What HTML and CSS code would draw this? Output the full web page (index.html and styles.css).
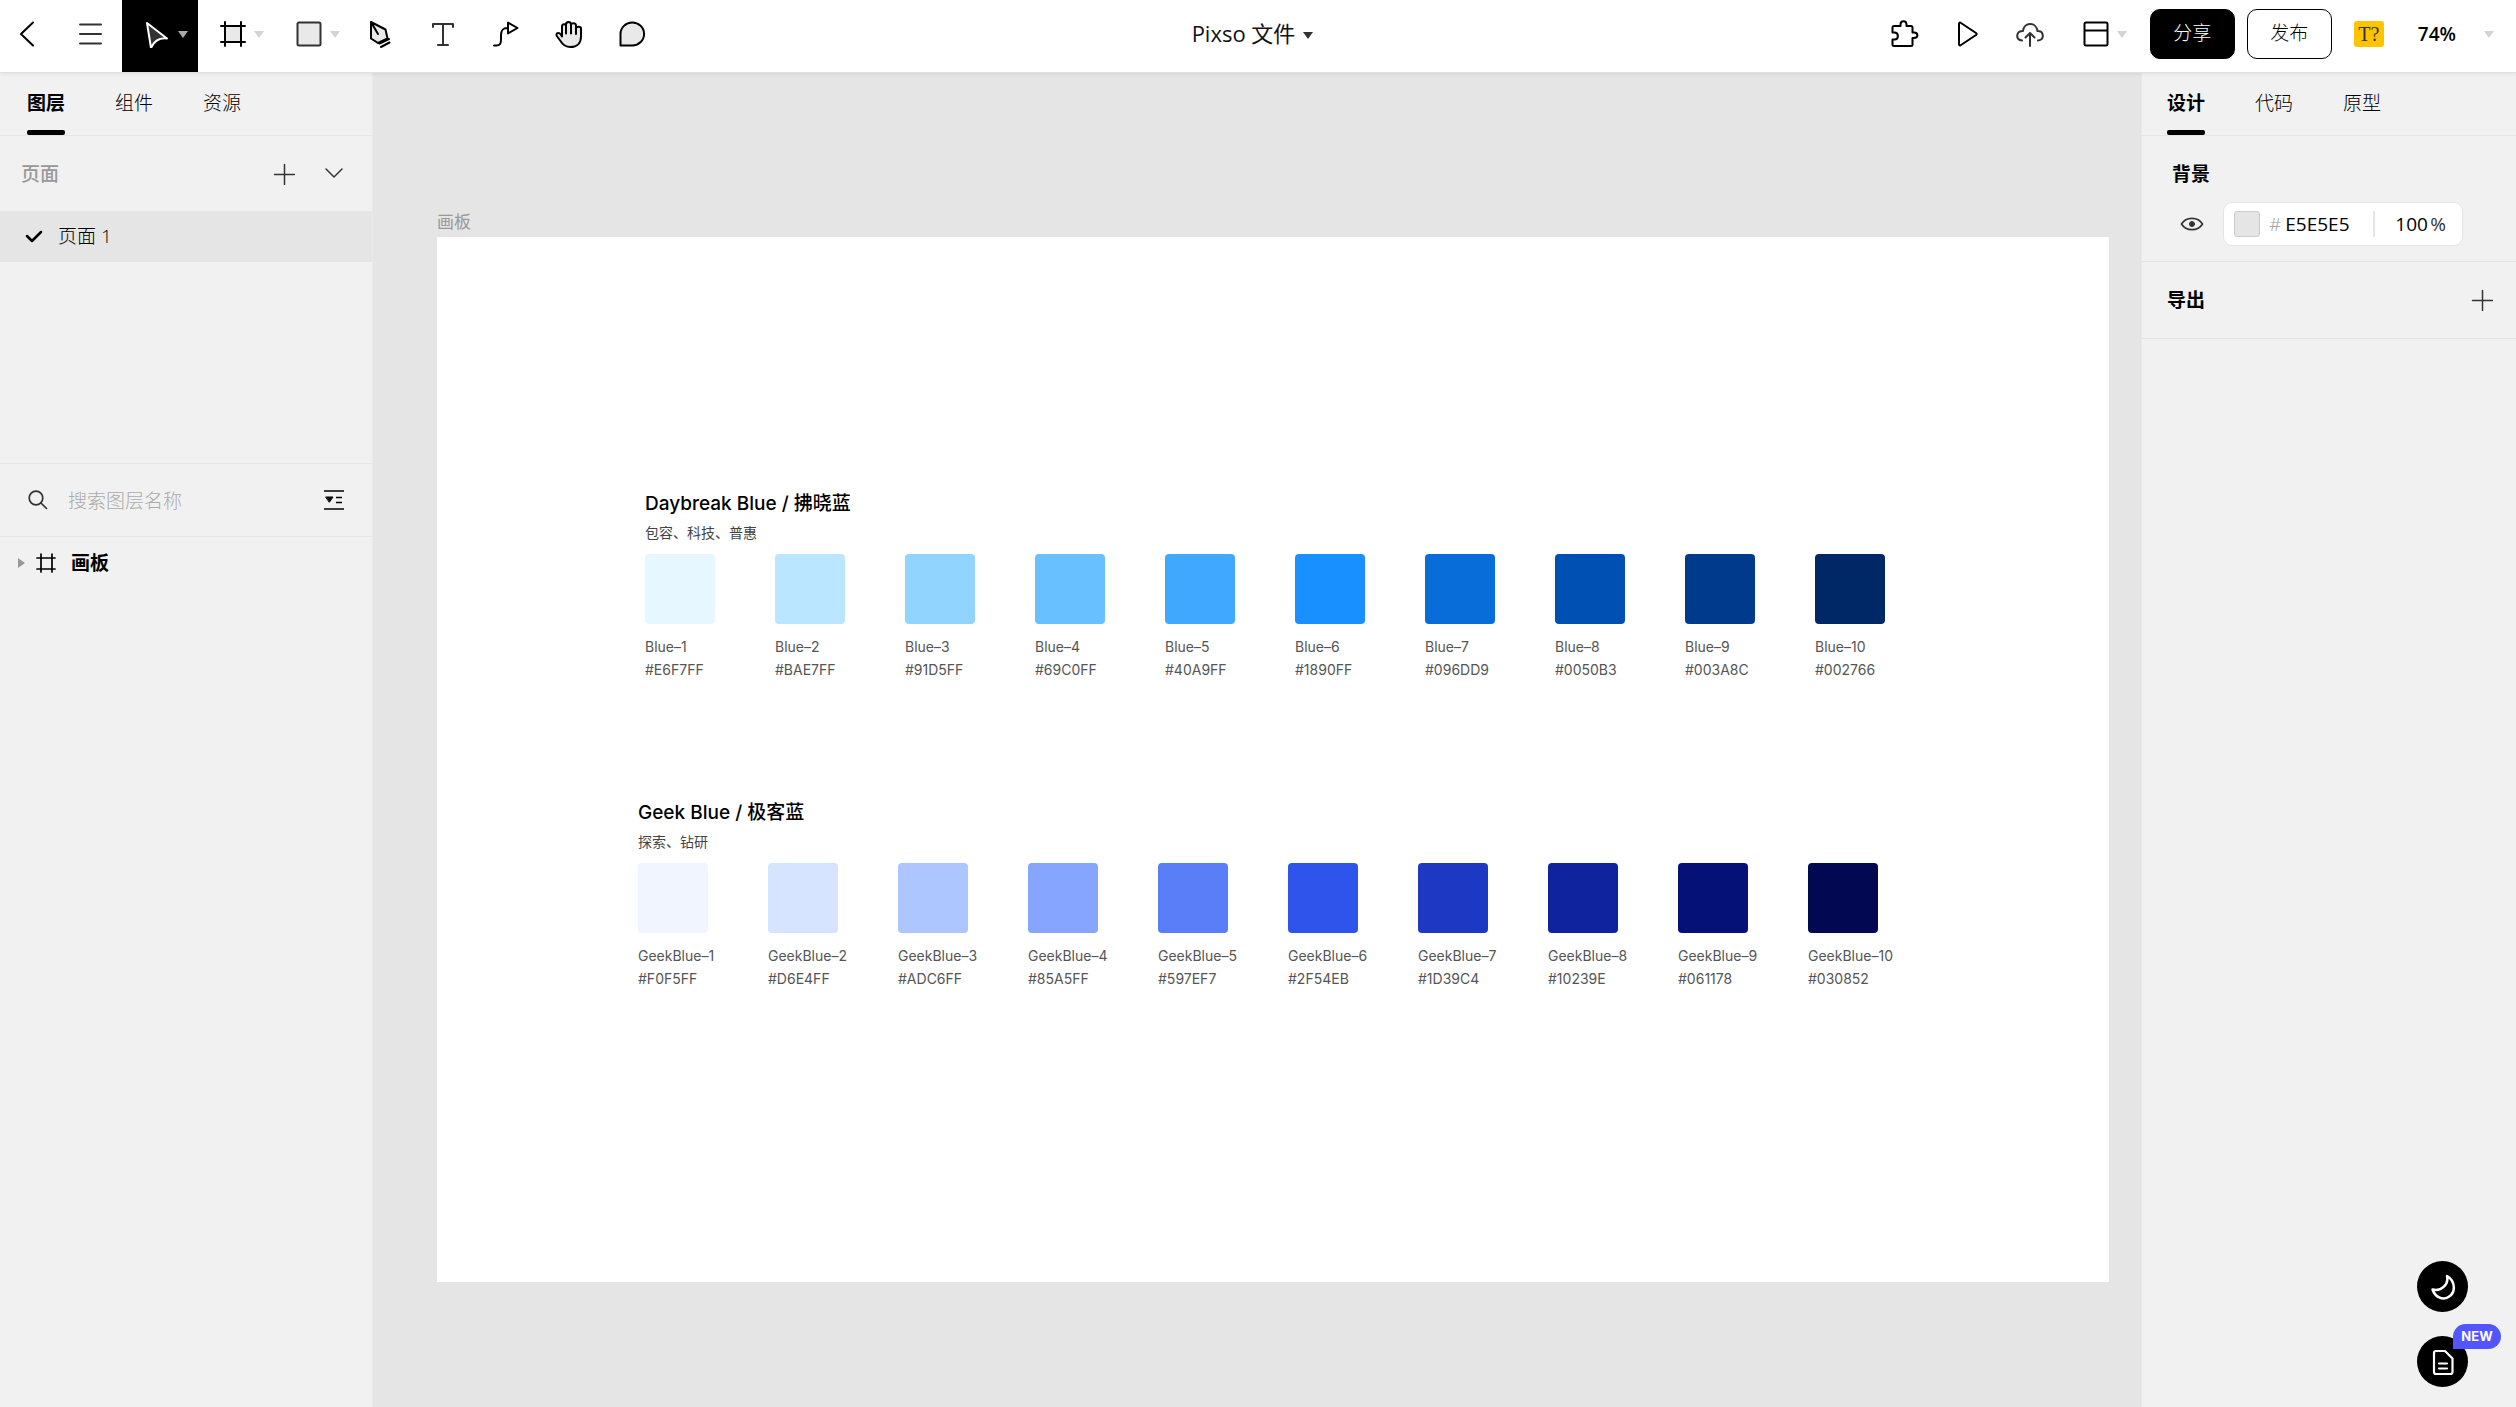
FILE: index.html
```html
<!DOCTYPE html>
<html lang="zh-CN">
<head>
<meta charset="utf-8">
<title>Pixso 文件</title>
<meta name="viewport" content="width=device-width, initial-scale=1">
<link rel="stylesheet" href="styles.css">
</head>
<body>
<header class="topbar">
  <div class="topbar-tools">
    <button class="back" aria-label="返回"><svg width="28" height="28" viewBox="0 0 28 28"><path d="M20 2.500L8 14l12 11.500" stroke-width="2"/></svg></button>
    <button class="menu" aria-label="菜单"><svg class="soft" width="28" height="28" viewBox="0 0 28 28"><path d="M4 4.500h21M4 14h21M4 23.500h21" stroke-width="2"/></svg></button>
    <button class="tool-menu active" aria-label="移动"><svg width="28" height="28" viewBox="0 0 28 28"><path class="cursor" d="M4 3L24 18.500Q13 17 8 28Z" stroke-width="2"/></svg><i class="caret"></i></button>
    <button class="tool-menu" aria-label="画板"><svg width="28" height="28" viewBox="0 0 28 28"><path class="shade" d="M6 6h16v16H6z" stroke="none"/><path d="M6 2v24M22 2v24M2 6h24M2 22h24" stroke-width="2"/></svg><i class="caret"></i></button>
    <button class="tool-menu" aria-label="矩形"><svg class="soft" width="28" height="28" viewBox="0 0 28 28"><rect class="shade" x="2.500" y="2.500" width="23" height="23" rx="1.500" stroke-width="2"/></svg><i class="caret"></i></button>
    <div class="tool-group">
      <button class="tool" aria-label="钢笔"><svg width="28" height="28" viewBox="0 0 28 28"><path class="shade" d="M5 2l14.500 7.500 2 9L12 23l-7-4.500zM5 2l7 12M13.500 23.500L23 19M15 27l8.500-4.500" stroke-width="2"/></svg></button>
      <button class="tool" aria-label="文本"><svg class="soft" width="28" height="28" viewBox="0 0 28 28"><path d="M4 7V4h20v3M14 4v21M9 25h10" stroke-width="2"/></svg></button>
      <button class="tool" aria-label="连接线"><svg width="28" height="28" viewBox="0 0 28 28"><path d="M2 25.500h2.500c4 0 4.500-2.500 4.500-6v-4c0-6 2-7.500 6.500-7.500M16 2.500v11l9.500-5.500z" stroke-width="2"/></svg></button>
      <button class="tool" aria-label="抓手"><svg width="28" height="28" viewBox="0 0 28 28"><path class="shade" d="M7 16.500V6.500c0-3 4-3 4-.5V4.500c0-3.500 5-3.500 5 0V5c0-2.500 5-2.500 5 .5v3c0-2.500 5-2.500 5 0v8C26 23 22 27 15.500 27c-5 0-8-2.500-10-6l-3.700-5c-1.300-2.500 1.700-4.500 4-1.500zM11 5v8.500M16 5v8.500M21 6v8" stroke-width="2"/></svg></button>
      <button class="tool" aria-label="评论"><svg width="28" height="28" viewBox="0 0 28 28"><path class="shade" d="M2.500 25.500V14A11.800 11.500 0 1 1 14.500 25.500z" stroke-width="2"/></svg></button>
    </div>
  </div>
  <button class="file-name">Pixso 文件<i class="caret dark"></i></button>
  <div class="topbar-actions">
    <button class="tool" aria-label="插件"><svg width="30" height="30" viewBox="0 0 30 30"><path d="M5 7h6.500V5.500c0-4.500 6-4.500 6 0V7H22q1.500 0 1.500 1.500v5H25c4.500 0 4.500 5.500 0 5.500h-1.500v6.500q0 1.500-1.500 1.500H5q-1.500 0-1.500-1.500v-5h2c4.500 0 4.500-7 0-7h-2V8.500Q3.500 7 5 7z" stroke-width="2"/></svg></button>
    <button class="tool" aria-label="播放"><svg width="28" height="28" viewBox="0 0 28 28"><path d="M6 4v20c0 1.500 1 1.800 2 1l15-10q1.300-1 0-2L8 3C7 2.200 6 2.500 6 4z" stroke-width="2"/></svg></button>
    <button class="tool" aria-label="上传"><svg class="soft" width="30" height="30" viewBox="0 0 30 30"><path d="M7 21.500C0 20.500 1 12 8 12 9 2.500 21 2.500 22.500 12c6.500 0 7.500 8.500.5 9.500M15 27V15M10.500 18.500L15 14l4.500 4.500" stroke-width="2"/></svg></button>
    <button class="tool-menu" aria-label="视图"><svg width="28" height="28" viewBox="0 0 28 28"><rect x="2.500" y="2.500" width="23" height="23" rx="1.500" stroke-width="2"/><path d="M3 10.500h22" stroke-width="2"/></svg><i class="caret"></i></button>
    <button class="btn primary">分享</button>
    <button class="btn">发布</button>
    <button class="font-badge">T?</button>
    <button class="zoom">74%<i class="caret"></i></button>
  </div>
</header>
<div class="workspace">
  <aside class="panel left">
    <nav class="tabs">
      <button class="tab current">图层</button><button class="tab">组件</button><button class="tab">资源</button>
    </nav>
    <section class="pages">
      <div class="pages-head">
        <h2>页面</h2>
        <button aria-label="添加页面"><svg class="soft" width="22" height="22" viewBox="0 0 22 22"><path d="M11.500 1.500v20M1.500 11.500h20" stroke-width="1.500"/></svg></button>
        <button aria-label="收起"><svg class="soft" width="22" height="22" viewBox="0 0 22 22"><path d="M3 6l8 8 8-8" stroke-width="1.500"/></svg></button>
      </div>
      <button class="page-item"><svg width="18" height="18" viewBox="0 0 18 18"><path d="M2 9l5 5 9-9" stroke-width="2.500"/></svg>页面 1</button>
    </section>
    <div class="search">
      <svg class="soft" width="20" height="20" viewBox="0 0 20 20"><circle cx="8" cy="8" r="6.800" stroke-width="1.700"/><path d="M13 13l5.500 5.500" stroke-width="1.700"/></svg>
      <input type="text" placeholder="搜索图层名称" aria-label="搜索图层名称">
      <button aria-label="筛选"><svg width="22" height="22" viewBox="0 0 22 22"><path d="M1 2h20M1 20h20M13 8.500h6M13 13.500h6" stroke-width="1.700" stroke-linecap="butt"/><path class="solid" d="M3 8h7l-3.500 5z" stroke-width="1"/></svg></button>
    </div>
    <button class="layer"><i class="caret side"></i><svg width="20" height="20" viewBox="0 0 20 20"><path d="M5 1v18M16 1v18M1 5h18M1 16h18" stroke-width="1.700"/></svg>画板</button>
  </aside>
  <main class="canvas">
    <div class="artboard-name">画板</div>
    <div class="artboard">
      <section class="palette daybreak">
        <h3>Daybreak Blue / 拂晓蓝</h3>
        <p>包容、科技、普惠</p>
        <ul>
          <li><i style="background:#E6F7FF"></i><span>Blue–1</span><span>#E6F7FF</span></li>
          <li><i style="background:#BAE7FF"></i><span>Blue–2</span><span>#BAE7FF</span></li>
          <li><i style="background:#91D5FF"></i><span>Blue–3</span><span>#91D5FF</span></li>
          <li><i style="background:#69C0FF"></i><span>Blue–4</span><span>#69C0FF</span></li>
          <li><i style="background:#40A9FF"></i><span>Blue–5</span><span>#40A9FF</span></li>
          <li><i style="background:#1890FF"></i><span>Blue–6</span><span>#1890FF</span></li>
          <li><i style="background:#096DD9"></i><span>Blue–7</span><span>#096DD9</span></li>
          <li><i style="background:#0050B3"></i><span>Blue–8</span><span>#0050B3</span></li>
          <li><i style="background:#003A8C"></i><span>Blue–9</span><span>#003A8C</span></li>
          <li><i style="background:#002766"></i><span>Blue–10</span><span>#002766</span></li>
        </ul>
      </section>
      <section class="palette geek">
        <h3>Geek Blue / 极客蓝</h3>
        <p>探索、钻研</p>
        <ul>
          <li><i style="background:#F0F5FF"></i><span>GeekBlue–1</span><span>#F0F5FF</span></li>
          <li><i style="background:#D6E4FF"></i><span>GeekBlue–2</span><span>#D6E4FF</span></li>
          <li><i style="background:#ADC6FF"></i><span>GeekBlue–3</span><span>#ADC6FF</span></li>
          <li><i style="background:#85A5FF"></i><span>GeekBlue–4</span><span>#85A5FF</span></li>
          <li><i style="background:#597EF7"></i><span>GeekBlue–5</span><span>#597EF7</span></li>
          <li><i style="background:#2F54EB"></i><span>GeekBlue–6</span><span>#2F54EB</span></li>
          <li><i style="background:#1D39C4"></i><span>GeekBlue–7</span><span>#1D39C4</span></li>
          <li><i style="background:#10239E"></i><span>GeekBlue–8</span><span>#10239E</span></li>
          <li><i style="background:#061178"></i><span>GeekBlue–9</span><span>#061178</span></li>
          <li><i style="background:#030852"></i><span>GeekBlue–10</span><span>#030852</span></li>
        </ul>
      </section>
    </div>
  </main>
  <aside class="panel right">
    <nav class="tabs">
      <button class="tab current">设计</button><button class="tab">代码</button><button class="tab">原型</button>
    </nav>
    <section class="background">
      <h2>背景</h2>
      <div class="background-row">
        <button aria-label="显示背景"><svg class="soft" width="24" height="24" viewBox="0 0 24 24"><path d="M1.500 12C6 4.500 18 4.500 22.500 12 18 19.500 6 19.500 1.500 12z" stroke-width="1.700"/><circle class="solid" cx="12" cy="12" r="2.500" stroke-width="1"/></svg></button>
        <div class="color-field">
          <i class="chip"></i>
          <label for="hex">#</label><input id="hex" class="hex" type="text" value="E5E5E5">
          <input id="alpha" class="alpha" type="text" value="100"><label class="unit" for="alpha">%</label>
        </div>
      </div>
    </section>
    <section class="export">
      <h2>导出</h2>
      <button aria-label="添加导出"><svg class="soft" width="22" height="22" viewBox="0 0 22 22"><path d="M11.500 1.500v20M1.500 11.500h20" stroke-width="1.500"/></svg></button>
    </section>
    <div class="floating">
      <button class="round" aria-label="深色模式"><svg width="28" height="28" viewBox="0 0 28 28"><path d="M18 3c2 8-5.500 16-14.500 13.500C6 24 13.500 27.500 19.500 24 27.500 19.500 26 7.500 18 3z" stroke-width="2.500"/></svg></button>
      <button class="round" aria-label="文档"><svg width="28" height="28" viewBox="0 0 28 28"><path d="M7 3h9l7.500 7.500V24q0 2-2 2H7q-2 0-2-2V5q0-2 2-2zM10 15.500h8M10 20.500h8" stroke-width="2.200"/></svg><span class="new">NEW</span></button>
    </div>
  </aside>
</div>
</body>
</html>
```

FILE: styles.css
```css
* { box-sizing: border-box; }
body {
  margin: 0;
  min-height: 100vh;
  display: flex;
  flex-direction: column;
  font: 300 19px/28px "Open Sans", "Noto Sans CJK SC", sans-serif;
  color: #000;
  background: #f1f1f1;
}
button, input { font: inherit; color: inherit; border: 0; padding: 0; margin: 0; background: none; }
button { display: flex; align-items: center; }
input { min-width: 0; outline: 0; }
h2, h3, p, ul { margin: 0; padding: 0; list-style: none; font-weight: inherit; }
svg { display: block; flex: none; fill: none; stroke: #000; stroke-linecap: round; stroke-linejoin: round; }
.soft { stroke: #333; }
.shade { fill: #e9e9e9; }
.solid { fill: #000; }
.soft .solid { fill: #333; }

.caret { width: 0; height: 0; flex: none; border: 5px solid transparent; border-top: 7px solid #d4d4d4; border-bottom: 0; }
.caret.dark { border-top-color: #333; margin-top: 4px; }
.caret.side { border: 5px solid transparent; border-left: 7px solid #999; border-right: 0; }

/* Top bar */
.topbar {
  position: relative;
  display: flex;
  justify-content: space-between;
  height: 73px;
  background: #fff;
  border-bottom: 1px solid #e0e0e0;
  box-shadow: 0 1px 4px rgba(0, 0, 0, .08);
}
.topbar > *, .tool-group { display: flex; }
.topbar-tools, .topbar-actions { flex: 1; }
.topbar-actions { justify-content: flex-end; align-items: center; padding: 0 22px 4px 0; }
.topbar-tools button { height: 72px; padding-bottom: 4px; justify-content: center; }
.back { width: 58px; padding-right: 4px; }
.menu { width: 64px; }
.tool-menu { width: 76px; gap: 7px; padding-left: 10px; justify-content: center; }
.tool-menu.active { background: #000; }
.active svg { stroke: #fff; }
.active .caret { border-top-color: #aaa; }
.cursor { fill: #333; }
.tool { width: 63px; justify-content: center; }
.tool-group { margin-left: -2px; }
.file-name { gap: 8px; padding: 0 0 6px 11px; font-size: 22px; font-weight: 400; color: #111; }
.btn { width: 85px; height: 50px; padding-bottom: 2px; justify-content: center; border: 1px solid #000; border-radius: 10px; margin-left: 12px; }
.btn.primary { background: #000; color: #fff; }
.font-badge { width: 30px; height: 26px; margin-left: 22px; justify-content: center; border-radius: 3px; background: #ffc400; color: #333; font: 400 20px/24px "Liberation Serif", serif; }
.zoom { margin-left: 34px; gap: 28px; font-weight: 600; }

/* Side panels */
.workspace { flex: 1; display: flex; }
.panel { display: flex; flex-direction: column; flex: none; background: #f1f1f1; }
.left { width: 373px; border-right: 1px solid #e9e9e9; }
.right { width: 375px; border-left: 1px solid #e9e9e9; }
.panel h2 { font-size: 19px; font-weight: 700; }
.tabs { display: flex; gap: 50px; height: 63px; padding-left: 27px; border-bottom: 1px solid #e5e5e5; }
.right .tabs { padding-left: 25px; }
.tab { align-items: flex-start; padding-top: 16px; border-bottom: 5px solid transparent; }
.tab.current { font-weight: 700; position: relative; }
.tab.current::after { content: ""; position: absolute; left: 0; right: 0; bottom: -5px; height: 5px; border-radius: 2px; background: #000; }
.pages { height: 328px; border-bottom: 1px solid #e5e5e5; }
.pages-head { display: flex; align-items: center; gap: 28px; height: 75px; padding: 0 27px 0 21px; }
.pages-head h2 { flex: 1; font-weight: 500; color: #999; }
.page-item { width: 100%; height: 51px; gap: 15px; padding: 0 0 2px 25px; background: #e5e5e5; }
.search { display: flex; align-items: center; height: 73px; padding: 0 27px 0 28px; border-bottom: 1px solid #e5e5e5; }
.search input { flex: 1; margin-left: 20px; padding-top: 1px; }
.search input::placeholder { color: #aaa; opacity: 1; }
.layer { height: 51px; padding-left: 18px; gap: 11px; font-weight: 700; }
.layer svg { margin-right: 4px; }

.background { height: 126px; padding: 24px 30px 0; border-bottom: 1px solid #e5e5e5; }
.background-row { display: flex; align-items: center; margin: 14px 0 0 8px; }
.color-field { display: flex; align-items: center; width: 240px; height: 44px; margin-left: 19px; padding-left: 10px; border: 1px solid #e5e5e5; border-radius: 9px; background: #fff; font-weight: 400; }
.chip { width: 26px; height: 26px; margin-right: 9px; border: 1px solid #ccc; border-radius: 3px; background: #e5e5e5; }
.color-field label { color: #999; font-weight: 300; }
.hex { width: 90px; height: 26px; margin-left: 4px; border-right: 2px solid #e5e5e5; }
.alpha { width: 34px; margin-left: 20px; }
.color-field .unit { margin-left: 1px; color: #333; font-weight: 400; }
.export { display: flex; align-items: center; justify-content: space-between; height: 77px; padding: 0 23px 0 25px; border-bottom: 1px solid #e5e5e5; }

/* Canvas */
.canvas { flex: 1; min-width: 0; padding: 136px 32px 60px 64px; background: #e5e5e5; }
.artboard-name { height: 28px; font-size: 17px; line-height: 26px; font-weight: 400; color: #999; }
.artboard { min-height: 1045px; padding: 253px 120px 120px 201px; background: #fff; font-family: Inter, "Noto Sans CJK SC", sans-serif; }
.palette h3 { font-size: 19px; line-height: 28px; font-weight: 500; }
.palette { padding-left: 7px; }
.palette.geek { padding-left: 0; margin-top: 118px; }
.palette p { font-size: 14px; line-height: 22px; margin-top: 4px; font-weight: 400; color: #444; }
.palette ul { display: grid; grid-template-columns: repeat(10, 70px); gap: 60px; margin-top: 10px; }
.palette li { font-size: 14px; line-height: 23px; font-weight: 400; color: #555; }
.palette i { display: block; height: 70px; margin-bottom: 11px; border-radius: 4px; }
.palette span { display: block; white-space: nowrap; }

/* Floating shortcuts */
.floating { display: grid; gap: 24px; margin: auto 48px 20px auto; }
.round { position: relative; width: 51px; height: 51px; justify-content: center; border-radius: 50%; background: #000; }
.round svg { stroke: #fff; }
.new { position: absolute; left: 36px; top: -12px; width: 48px; height: 25px; border-radius: 13px 13px 13px 0; background: #5355ff; color: #fff; text-align: center; font: 700 13px/25px Inter, sans-serif; }
```
